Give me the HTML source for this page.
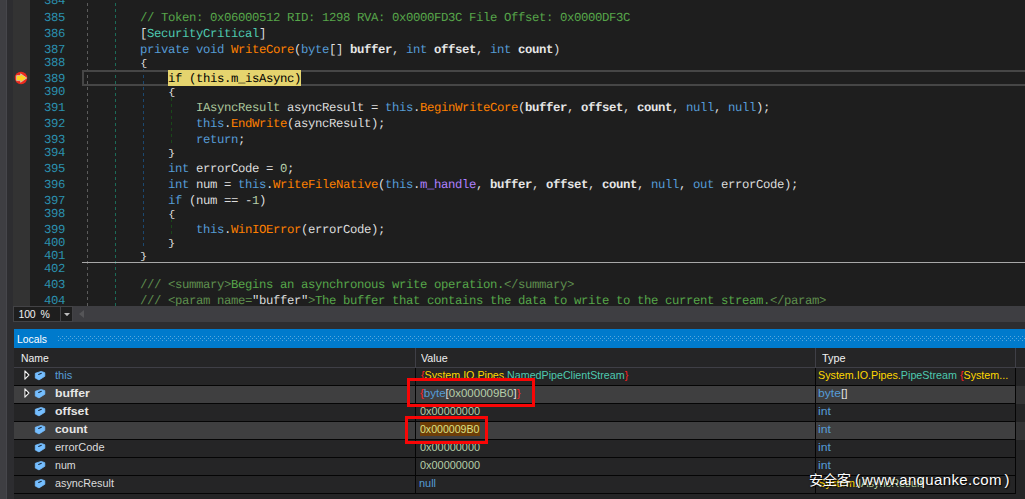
<!DOCTYPE html>
<html><head><meta charset="utf-8"><title>dnSpy</title>
<style>
html,body{margin:0;padding:0}
body{width:1025px;height:499px;background:#2d2d30;overflow:hidden;position:relative;font-family:"Liberation Sans",sans-serif}
div,span,i,svg{position:absolute;box-sizing:border-box}
.cl span,.sx span{position:static}
.sx{display:inline-block;transform-origin:0 50%;top:0;white-space:pre}
.row .sx{top:-1px}
.fill{left:1016px;width:9px;height:18px;background:#343435}
#hdr .sx,#title .sx{top:1px}
#strip{left:0;top:0;width:7px;height:499px;background:#3e3e42;border-right:1px solid #46464b}
#ed{left:13px;top:0;width:1012px;height:306px;background:#1e1e1e}
#gm{left:13px;top:0;width:17px;height:306px;background:#333333}
.ln,.cl{font-family:"Liberation Mono",monospace;font-size:12.3px;letter-spacing:-0.381px;line-height:16px;text-rendering:geometricPrecision;height:16px;white-space:pre}
.ln{left:44px;color:#2b91af}
.br1{transform:translateY(-0.8px) scaleY(0.78);transform-origin:0 13.5px}
.cl{color:#dcdcdc}
.p{color:#dcdcdc}.k{color:#569cd6}.t{color:#4ec9b0}.m{color:#ff8000}.c{color:#57a64a}
.b{color:#e6e6e6;font-weight:bold}.n{color:#b5cea8}.f{color:#ae81ff}.i{color:#aac59a}
.x{color:#5f8f4e}.d{color:#57a64a}.s{color:#dcdcdc}
.cur{color:#000}
#curbg{left:168px;top:70px;width:133px;height:16px;background:#e5d46e}
.g{width:1px;background-size:1px 6px}
#curbox{left:82px;top:70px;width:960px;height:16px;border:2px solid #464646}
#sep{left:82px;top:262px;width:943px;height:1px;background:#a8a8a8}
#hs{left:72px;top:306px;width:953px;height:16px;background:#3e3e42}
#zoom{left:13px;top:306px;width:60px;height:16px;background:#1e1e1e;border:1px solid #434346;color:#f1f1f1;font-size:10.5px;line-height:15px;letter-spacing:-0.2px}
#zb{left:60px;top:307px;width:12px;height:14px;background:#1e1e1e;border-left:1px solid #434346}
#title{left:14px;top:329px;width:1011px;height:19px;background:#007acc;color:#fff;font-size:11.5px;line-height:19px}
.grip{left:44px;top:7px}
#hdr{left:14px;top:348px;width:1011px;height:20px;background:#252526;border-bottom:1px solid #3f3f46;color:#f1f1f1;font-size:11.5px;line-height:19px}
#hdr span{top:0}
#hdr i{top:0;width:1px;height:19px;background:#3f3f46}
#lb{left:14px;top:368px;width:1011px;height:131px;background:#252526}
.row{left:14px;width:1002px;height:18px;background:#252526;border-bottom:1px solid #050505;font-size:11.5px;line-height:17px;color:#dcdcdc;white-space:pre}
.row.sel{background:#3f3f40}
.row i{top:0;width:1px;height:17px;background:#050505}
.s1{left:401px}.s2{left:801px}.s3{left:1001px}
.tri{left:9px;top:1px}
.cube{left:20px;top:2px}
.nm{position:absolute!important;left:41px;top:0}
.vl{left:406px;top:0;width:390px;overflow:hidden;height:16px}
.tp{left:804px;top:0;width:196px;overflow:hidden;height:16px}
.kw{color:#569cd6}.bd{font-weight:bold;color:#e6e6e6}.pl{color:#dcdcdc}
.br{color:#ff2020}.ns{color:#ffd700}.ty{color:#4ec9b0}.nu{color:#b5cea8}.ifc{color:#b8d7a3}
.hl{color:#dde184}
.hlbg{position:absolute;left:405.5px;top:0;width:60.5px;height:13.5px;background:#6e3e08}
.red{border:3px solid #f90606}
#wm{left:0;top:470px;width:1025px;height:20px;color:#fff;font-family:"Liberation Sans","Noto Sans CJK SC",sans-serif;font-size:15px;line-height:20px;white-space:pre;text-shadow:1px 1px 1px rgba(0,0,0,.85),0 0 2px rgba(0,0,0,.5)}
#wm span{top:0}
</style></head><body>
<div id="strip"></div>
<div id="ed"></div>
<div id="gm"></div>
<div class="g" style="left:87px;top:0px;height:306px;background-image:linear-gradient(#5c5c5c 3px,transparent 3px);background-position:0 3px"></div>
<div class="g" style="left:115px;top:0px;height:306px;background-image:linear-gradient(#1b6b58 3px,transparent 3px);background-position:0 3px"></div>
<div class="g" style="left:143px;top:69px;height:180px;background-image:linear-gradient(#1b4870 3px,transparent 3px);background-position:0 0px"></div>
<div class="g" style="left:171px;top:98px;height:48px;background-image:linear-gradient(#1a481a 3px,transparent 3px);background-position:0 0px"></div>
<div class="g" style="left:171px;top:220px;height:16px;background-image:linear-gradient(#1a481a 3px,transparent 3px);background-position:0 5px"></div>
<div id="curbox"></div>
<div id="sep"></div>
<div id="curbg"></div>
<div class="ln" style="top:-7px">384</div>
<div class="ln" style="top:10px">385</div>
<div class="cl" style="top:10px;left:140px"><span class="c">// Token: 0x06000512 RID: 1298 RVA: 0x0000FD3C File Offset: 0x0000DF3C</span></div>
<div class="ln" style="top:26px">386</div>
<div class="cl" style="top:26px;left:140px"><span class="p">[</span><span class="t">SecurityCritical</span><span class="p">]</span></div>
<div class="ln" style="top:42px">387</div>
<div class="cl" style="top:42px;left:140px"><span class="k">private void</span><span class="p"> </span><span class="m">WriteCore</span><span class="p">(</span><span class="k">byte</span><span class="p">[] </span><span class="b">buffer</span><span class="p">, </span><span class="k">int</span><span class="p"> </span><span class="b">offset</span><span class="p">, </span><span class="k">int</span><span class="p"> </span><span class="b">count</span><span class="p">)</span></div>
<div class="ln" style="top:55px">388</div>
<div class="cl br1" style="top:55px;left:140px"><span class="p">{</span></div>
<div class="ln" style="top:71px">389</div>
<div class="cl" style="top:71px;left:168px"><span class="cur">if (this.m_isAsync)</span></div>
<div class="ln" style="top:84px">390</div>
<div class="cl br1" style="top:84px;left:168px"><span class="p">{</span></div>
<div class="ln" style="top:100px">391</div>
<div class="cl" style="top:100px;left:196px"><span class="i">IAsyncResult</span><span class="p"> asyncResult = </span><span class="k">this</span><span class="p">.</span><span class="m">BeginWriteCore</span><span class="p">(</span><span class="b">buffer</span><span class="p">, </span><span class="b">offset</span><span class="p">, </span><span class="b">count</span><span class="p">, </span><span class="k">null</span><span class="p">, </span><span class="k">null</span><span class="p">);</span></div>
<div class="ln" style="top:116px">392</div>
<div class="cl" style="top:116px;left:196px"><span class="k">this</span><span class="p">.</span><span class="m">EndWrite</span><span class="p">(asyncResult);</span></div>
<div class="ln" style="top:132px">393</div>
<div class="cl" style="top:132px;left:196px"><span class="k">return</span><span class="p">;</span></div>
<div class="ln" style="top:145px">394</div>
<div class="cl br1" style="top:145px;left:168px"><span class="p">}</span></div>
<div class="ln" style="top:161px">395</div>
<div class="cl" style="top:161px;left:168px"><span class="k">int</span><span class="p"> errorCode = </span><span class="n">0</span><span class="p">;</span></div>
<div class="ln" style="top:177px">396</div>
<div class="cl" style="top:177px;left:168px"><span class="k">int</span><span class="p"> num = </span><span class="k">this</span><span class="p">.</span><span class="m">WriteFileNative</span><span class="p">(</span><span class="k">this</span><span class="p">.</span><span class="f">m_handle</span><span class="p">, </span><span class="b">buffer</span><span class="p">, </span><span class="b">offset</span><span class="p">, </span><span class="b">count</span><span class="p">, </span><span class="k">null</span><span class="p">, </span><span class="k">out</span><span class="p"> errorCode);</span></div>
<div class="ln" style="top:193px">397</div>
<div class="cl" style="top:193px;left:168px"><span class="k">if</span><span class="p"> (num == -</span><span class="n">1</span><span class="p">)</span></div>
<div class="ln" style="top:206px">398</div>
<div class="cl br1" style="top:206px;left:168px"><span class="p">{</span></div>
<div class="ln" style="top:222px">399</div>
<div class="cl" style="top:222px;left:196px"><span class="k">this</span><span class="p">.</span><span class="m">WinIOError</span><span class="p">(errorCode);</span></div>
<div class="ln" style="top:235px">400</div>
<div class="cl br1" style="top:235px;left:168px"><span class="p">}</span></div>
<div class="ln" style="top:248px">401</div>
<div class="cl br1" style="top:248px;left:140px"><span class="p">}</span></div>
<div class="ln" style="top:261px">402</div>
<div class="ln" style="top:277px">403</div>
<div class="cl" style="top:277px;left:140px"><span class="x">/// &lt;summary&gt;</span><span class="d">Begins an asynchronous write operation.</span><span class="x">&lt;/summary&gt;</span></div>
<div class="ln" style="top:293px">404</div>
<div class="cl" style="top:293px;left:140px"><span class="x">/// &lt;param name=</span><span class="s">"buffer"</span><span class="x">&gt;</span><span class="d">The buffer that contains the data to write to the current stream.</span><span class="x">&lt;/param&gt;</span></div>
<svg style="left:14px;top:71px" width="14" height="14" viewBox="0 0 14 14"><circle cx="7" cy="7" r="6.2" fill="#ee2a1e"/><path d="M2.6 4.6 H6.6 V2.8 L12.7 7 L6.6 11.3 V9.6 H2.6 Z" fill="#ffd21f" stroke="#c8d6cf" stroke-width="0.7"/></svg>
<div id="hs"></div>
<div id="zoom"><span style="left:4.5px;top:-0.5px">100</span><span style="left:26.5px;top:-0.5px">%</span></div>
<div id="zb"><svg style="left:3px;top:5.6px" width="6" height="3.2" viewBox="0 0 6 3.2"><path d="M0 0 H6 L3 3.2 Z" fill="#bdbdbd"/></svg></div>
<svg style="left:79px;top:310px" width="5" height="8" viewBox="0 0 5 8"><path d="M5 0 V8 L0 4 Z" fill="#555558"/></svg>
<div id="title"><span id="loc" class="sx " style="transform:scaleX(0.9023);left:3px">Locals</span><svg class="grip" width="967" height="5"><defs><pattern id="gp" width="4" height="4" patternUnits="userSpaceOnUse"><rect x="0" y="0" width="1" height="1" fill="#59a8de"/><rect x="2" y="2" width="1" height="1" fill="#59a8de"/></pattern></defs><rect width="967" height="5" fill="url(#gp)"/></svg></div>
<div id="hdr"><span id="hn" class="sx " style="transform:scaleX(0.9026);left:7px">Name</span><i style="left:401px"></i><span id="hv" class="sx " style="transform:scaleX(0.9348);left:407px">Value</span><i style="left:801px"></i><span id="ht" class="sx " style="transform:scaleX(0.9464);left:808px">Type</span><i style="left:1001px"></i></div>
<div id="lb"></div>
<div class="row" style="top:368px"><svg class="tri" width="7" height="12" viewBox="0 0 7 12"><path d="M1.9 1.8 L1.9 10.2 L5.9 6 Z" fill="#0a0a0a" stroke="#f1f1f1" stroke-width="1.1" stroke-linejoin="round"/></svg><svg class="cube" width="13" height="11" viewBox="0 0 13 11"><path d="M1.3 3.3 L7.2 1.4 L10.8 2.7 L10.8 6.3 L5 9.9 L1.3 8.1 Z" fill="#75beff" stroke="#75beff" stroke-width="0.8" stroke-linejoin="round"/><path d="M4.7 4.5 L7.3 3.3" stroke="#1b3048" stroke-width="1.2" stroke-linecap="round"/></svg><span id="n0" class="sx kw" style="transform:scaleX(0.9661);left:41px">this</span><span id="v0" class="sx " style="transform:scaleX(0.9288);left:406.5px"><span class="br">{</span><span class="ns">System.IO.Pipes.</span><span class="ty">NamedPipeClientStream</span><span class="br">}</span></span><span id="t0" class="sx " style="transform:scaleX(0.9327);left:803.5px"><span class="ns">System.IO.Pipes.</span><span class="ty">PipeStream</span> <span class="br">{</span><span class="ns">System...</span></span><i class="s1"></i><i class="s2"></i><i class="s3"></i></div>
<div class="row sel" style="top:386px"><svg class="tri" width="7" height="12" viewBox="0 0 7 12"><path d="M1.9 1.8 L1.9 10.2 L5.9 6 Z" fill="#0a0a0a" stroke="#f1f1f1" stroke-width="1.1" stroke-linejoin="round"/></svg><svg class="cube" width="13" height="11" viewBox="0 0 13 11"><path d="M1.3 3.3 L7.2 1.4 L10.8 2.7 L10.8 6.3 L5 9.9 L1.3 8.1 Z" fill="#75beff" stroke="#75beff" stroke-width="0.8" stroke-linejoin="round"/><path d="M4.7 4.5 L7.3 3.3" stroke="#1b3048" stroke-width="1.2" stroke-linecap="round"/></svg><span id="n1" class="sx bd" style="transform:scaleX(1.0677);left:41px">buffer</span><span id="v1" class="sx " style="transform:scaleX(1.0006);left:406.0px"><span class="br">{</span><span class="kw">byte</span><span class="pl">[</span><span class="nu">0x000009B0</span><span class="pl">]</span><span class="br">}</span></span><span id="t1" class="sx " style="transform:scaleX(1.0554);left:803.5px"><span class="kw">byte</span><span class="pl">[]</span></span><i class="s1"></i><i class="s2"></i><i class="s3"></i></div>
<div class="row" style="top:404px"><svg class="cube" width="13" height="11" viewBox="0 0 13 11"><path d="M1.3 3.3 L7.2 1.4 L10.8 2.7 L10.8 6.3 L5 9.9 L1.3 8.1 Z" fill="#75beff" stroke="#75beff" stroke-width="0.8" stroke-linejoin="round"/><path d="M4.7 4.5 L7.3 3.3" stroke="#1b3048" stroke-width="1.2" stroke-linecap="round"/></svg><span id="n2" class="sx bd" style="transform:scaleX(1.0731);left:41px">offset</span><span id="v2" class="sx " style="transform:scaleX(0.9477);left:405.5px"><span class="nu">0x00000000</span></span><span id="t2" class="sx " style="transform:scaleX(1.0612);left:803.5px"><span class="kw">int</span></span><i class="s1"></i><i class="s2"></i><i class="s3"></i></div>
<div class="row sel" style="top:422px"><svg class="cube" width="13" height="11" viewBox="0 0 13 11"><path d="M1.3 3.3 L7.2 1.4 L10.8 2.7 L10.8 6.3 L5 9.9 L1.3 8.1 Z" fill="#75beff" stroke="#75beff" stroke-width="0.8" stroke-linejoin="round"/><path d="M4.7 4.5 L7.3 3.3" stroke="#1b3048" stroke-width="1.2" stroke-linecap="round"/></svg><b class="hlbg"></b><span id="n3" class="sx bd" style="transform:scaleX(1.0347);left:41px">count</span><span id="v3" class="sx " style="transform:scaleX(0.9180);left:405.5px"><span class="hl">0x000009B0</span></span><span id="t3" class="sx " style="transform:scaleX(1.0612);left:803.5px"><span class="kw">int</span></span><i class="s1"></i><i class="s2"></i><i class="s3"></i></div>
<div class="row" style="top:440px"><svg class="cube" width="13" height="11" viewBox="0 0 13 11"><path d="M1.3 3.3 L7.2 1.4 L10.8 2.7 L10.8 6.3 L5 9.9 L1.3 8.1 Z" fill="#75beff" stroke="#75beff" stroke-width="0.8" stroke-linejoin="round"/><path d="M4.7 4.5 L7.3 3.3" stroke="#1b3048" stroke-width="1.2" stroke-linecap="round"/></svg><span id="n4" class="sx pl" style="transform:scaleX(0.9559);left:41px">errorCode</span><span id="v4" class="sx " style="transform:scaleX(0.9477);left:405.5px"><span class="nu">0x00000000</span></span><span id="t4" class="sx " style="transform:scaleX(1.0612);left:803.5px"><span class="kw">int</span></span><i class="s1"></i><i class="s2"></i><i class="s3"></i></div>
<div class="row" style="top:458px"><svg class="cube" width="13" height="11" viewBox="0 0 13 11"><path d="M1.3 3.3 L7.2 1.4 L10.8 2.7 L10.8 6.3 L5 9.9 L1.3 8.1 Z" fill="#75beff" stroke="#75beff" stroke-width="0.8" stroke-linejoin="round"/><path d="M4.7 4.5 L7.3 3.3" stroke="#1b3048" stroke-width="1.2" stroke-linecap="round"/></svg><span id="n5" class="sx pl" style="transform:scaleX(0.9207);left:41px">num</span><span id="v5" class="sx " style="transform:scaleX(0.9477);left:405.5px"><span class="nu">0x00000000</span></span><span id="t5" class="sx " style="transform:scaleX(1.0612);left:803.5px"><span class="kw">int</span></span><i class="s1"></i><i class="s2"></i><i class="s3"></i></div>
<div class="row" style="top:476px"><svg class="cube" width="13" height="11" viewBox="0 0 13 11"><path d="M1.3 3.3 L7.2 1.4 L10.8 2.7 L10.8 6.3 L5 9.9 L1.3 8.1 Z" fill="#75beff" stroke="#75beff" stroke-width="0.8" stroke-linejoin="round"/><path d="M4.7 4.5 L7.3 3.3" stroke="#1b3048" stroke-width="1.2" stroke-linecap="round"/></svg><span id="n6" class="sx pl" style="transform:scaleX(0.9403);left:41px">asyncResult</span><span id="v6" class="sx " style="transform:scaleX(0.9494);left:405.0px"><span class="kw">null</span></span><span id="t6" class="sx " style="transform:scaleX(0.9617);left:803.5px"><span class="ns">System.</span><span class="ifc">IAsyncResult</span></span><i class="s1"></i><i class="s2"></i><i class="s3"></i></div><div class="fill" style="top:386px"></div><div class="fill" style="top:422px"></div>
<div class="red" style="left:407px;top:378px;width:128px;height:29px"></div>
<div class="red" style="left:405px;top:416px;width:83px;height:28px"></div>
<div id="wm"><span style="left:809px;font-size:14px">安全客</span><span style="left:855px">(</span><span style="left:862px;letter-spacing:0.35px">www.anquanke.com</span><span style="left:1004.5px">)</span></div>
</body></html>
